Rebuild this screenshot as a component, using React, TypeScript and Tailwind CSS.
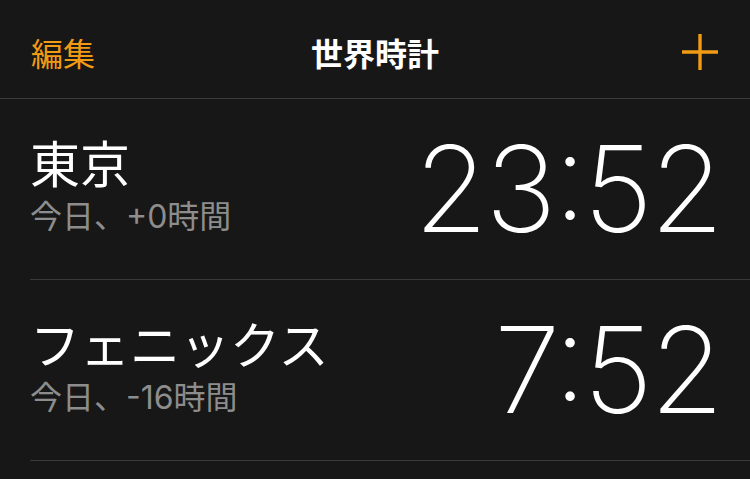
import React from "react";

type City = {
  name: string;
  offset: string;
  time: string;
};

const cities: City[] = [
  { name: "東京", offset: "今日、+0時間", time: "23:52" },
  { name: "フェニックス", offset: "今日、-16時間", time: "7:52" },
];

const PlusIcon = () => (
  <svg width="36" height="36" viewBox="0 0 36 36" fill="none">
    <path d="M18 0v36M0 18h36" stroke="#f19a13" strokeWidth="3.4" />
  </svg>
);

const CityRow = ({ city }: { city: City }) => (
  <div className="ml-[30px] flex h-[181px] items-center justify-between border-b border-[#3a3a3a] pr-[29px]">
    <div className="mb-[6px] flex flex-col">
      <span className="font-['Noto_Sans_CJK_JP',sans-serif] text-[50px] leading-[46px] text-white">
        {city.name}
      </span>
      <span className="mt-[16px] font-['Inter','Noto_Sans_CJK_JP',sans-serif] text-[32px] leading-[34px] text-[#8d8d8d]">
        {city.offset}
      </span>
    </div>
    <span className="font-['Inter',sans-serif] text-[120px] font-[160] leading-none tracking-[-3px] text-white [font-feature-settings:'case']">
      {city.time}
    </span>
  </div>
);

export default function App() {
  return (
    <div className="h-[479px] w-[750px] overflow-hidden bg-[#171717]">
      <div className="relative flex h-[99px] items-center justify-between border-b border-[#3a3a3a] pl-[31px] pr-[32px] pt-[6px]">
        <span className="font-['Noto_Sans_CJK_JP',sans-serif] text-[32px] leading-none text-[#f19a13]">
          編集
        </span>
        <span className="absolute left-1/2 -translate-x-1/2 font-['Noto_Sans_CJK_JP',sans-serif] text-[32px] font-bold leading-none text-white">
          世界時計
        </span>
        <PlusIcon />
      </div>
      {cities.map((c) => (
        <CityRow key={c.name} city={c} />
      ))}
    </div>
  );
}
